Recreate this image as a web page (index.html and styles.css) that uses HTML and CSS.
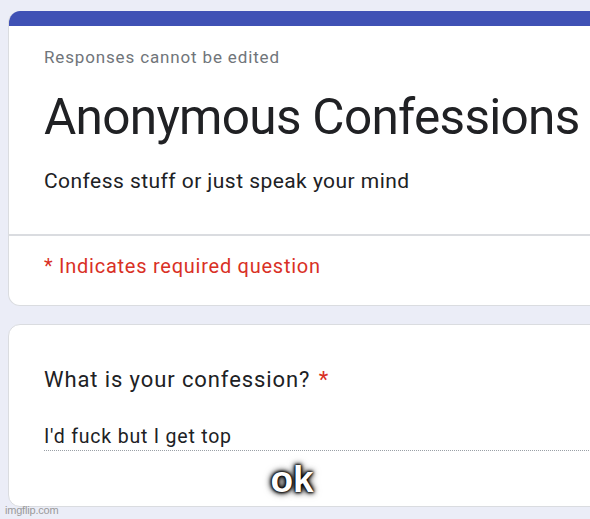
FILE: index.html
```html
<!DOCTYPE html>
<html lang="en">
<head>
    <meta charset="UTF-8">
    <title>Anonymous Confessions</title>
    <link rel="stylesheet" href="styles.css">
</head>
<body>
    <div class="form">
        <div class="card card-header">
            <div class="card-accent"></div>
            <div class="card-body">
                <div class="notice">Responses cannot be edited</div>
                <h1 class="form-title">Anonymous Confessions</h1>
                <div class="form-desc">Confess stuff or just speak your mind</div>
            </div>
            <div class="divider"></div>
            <div class="required-note">* Indicates required question</div>
        </div>

        <div class="card card-question">
            <div class="question-title">What is your confession? <span class="star">*</span></div>
            <div class="answer">I'd fuck but I get top</div>
        </div>
    </div>

    <!-- meme caption + watermark -->
    <div class="caption">ok</div>
    <div class="watermark">imgflip.com</div>
</body>
</html>
```

FILE: styles.css
```css
body {
    margin: 0;
    height: 519px;
    overflow: hidden;
    position: relative;
    background-color: #ebedf7;
    font-family: Roboto, 'Noto Sans', sans-serif;
    color: #202124;
}
.form {
    display: flex;
    flex-direction: column;
    gap: 18px;
    padding: 11px 0 0 8px;
}
.card {
    width: 640px;
    background-color: #fff;
    border: 1.5px solid #dadce0;
    border-radius: 12px;
    box-sizing: border-box;
}
.card-header {
    border-top: none;
    overflow: hidden;
    height: 295px;
}
.card-accent {
    height: 15px;
    background-color: #3f51b5;
}
.card-body {
    padding: 19px 0 0 35px;
}
.notice {
    font-size: 17px;
    line-height: 24px;
    color: #70757a;
    letter-spacing: 0.85px;
}
.form-title {
    margin: 18px 0 0;
    font-size: 49.5px;
    line-height: 60px;
    font-weight: 400;
    letter-spacing: -0.7px;
}
.form-desc {
    margin-top: 19px;
    font-size: 21px;
    line-height: 30px;
    letter-spacing: 0.45px;
}
.divider {
    margin-top: 38px;
    height: 1.5px;
    background-color: #dadce0;
}
.required-note {
    padding: 16px 0 0 35px;
    font-size: 20px;
    line-height: 28px;
    color: #d93025;
    letter-spacing: 0.75px;
}
.card-question {
    height: 183px;
    padding: 40px 0 0 35px;
}
.question-title {
    font-size: 22px;
    line-height: 30px;
    letter-spacing: 0.9px;
}
.star {
    color: #d93025;
    margin-left: 2px;
}
.answer {
    margin-top: 29px;
    font-size: 19.5px;
    line-height: 26px;
    letter-spacing: 0.8px;
    border-bottom: 1.5px dotted #9aa0a6;
}
.caption {
    position: absolute;
    left: 0;
    right: 0;
    top: 459px;
    text-align: center;
    padding-right: 6px;
    font-family: 'Liberation Sans', Arial, sans-serif;
    font-weight: bold;
    font-size: 37px;
    line-height: 42px;
    color: #fff;
    text-shadow: 0 0 2px #000, 0 0 3px #000, 0 0 4px #000, 0 0 6px #000, 0 0 8px rgba(0, 0, 0, 0.6);
}
.watermark {
    position: absolute;
    left: 5px;
    bottom: 3px;
    font-family: 'Liberation Sans', Arial, sans-serif;
    font-size: 11px;
    color: #9a9a9a;
    letter-spacing: -0.2px;
}
```
